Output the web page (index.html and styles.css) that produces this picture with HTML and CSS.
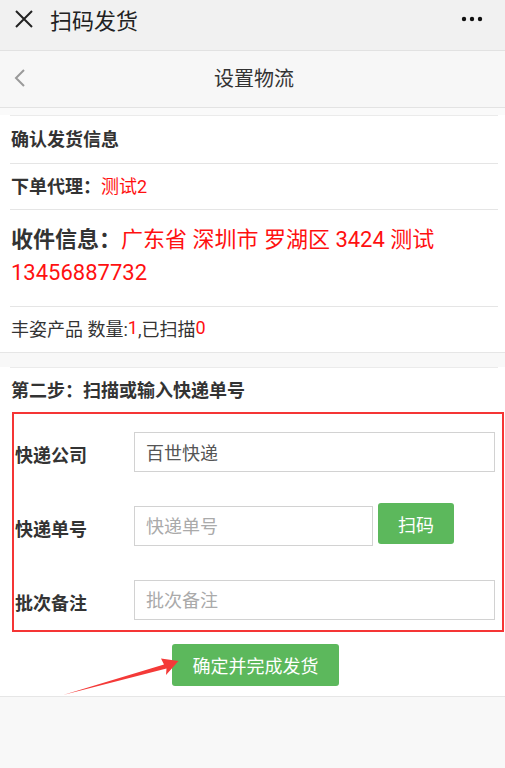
FILE: index.html
```html
<!DOCTYPE html>
<html lang="zh-CN">
<head>
<meta charset="utf-8">
<title>扫码发货</title>
<link rel="stylesheet" href="styles.css">
</head>
<body>
<div class="page">
  <header class="topbar">
    <svg class="close-icon" width="20" height="20" viewBox="0 0 20 20"><path d="M2 2 L18 18 M18 2 L2 18" stroke="#222" stroke-width="2" fill="none"/></svg>
    <span class="top-title">扫码发货</span>
    <svg class="more-icon" width="22" height="6" viewBox="0 0 22 6"><circle cx="3" cy="3" r="2.2" fill="#111"/><circle cx="11" cy="3" r="2.2" fill="#111"/><circle cx="19" cy="3" r="2.2" fill="#111"/></svg>
  </header>
  <nav class="navbar">
    <svg class="back-icon" width="14" height="20" viewBox="0 0 14 20"><polyline points="11,2 3,10 11,18" stroke="#9a9a9a" stroke-width="2" fill="none"/></svg>
    <span class="nav-title">设置物流</span>
  </nav>
  <div class="gap gap-top"></div>
  <section class="card">
    <div class="card-inner">
      <div class="row row-head bold">确认发货信息</div>
      <div class="row row-agent"><span class="bold">下单代理：</span><span class="red">测试2</span></div>
      <div class="row row-recv"><span class="bold">收件信息：</span><span class="red">广东省 深圳市 罗湖区 3424 测试</span> <span class="red">13456887732</span></div>
      <div class="row row-prod no-border">丰姿产品 数量:<span class="red">1</span>,已扫描<span class="red">0</span></div>
    </div>
  </section>
  <div class="gap gap-mid"></div>
  <section class="card">
    <div class="card-inner">
      <div class="row row-step bold no-border">第二步：扫描或输入快递单号</div>
      <div class="redbox">
        <div class="field">
          <label class="field-label">快递公司</label>
          <input class="field-input" type="text" value="百世快递">
        </div>
        <div class="field">
          <label class="field-label">快递单号</label>
          <input class="field-input short" type="text" placeholder="快递单号">
          <button class="btn btn-scan">扫码</button>
        </div>
        <div class="field">
          <label class="field-label">批次备注</label>
          <input class="field-input" type="text" placeholder="批次备注">
        </div>
      </div>
      <div class="submit-wrap">
        <button class="btn btn-submit">确定并完成发货</button>
      </div>
    </div>
  </section>
  <div class="bottom-fill"></div>
  <svg class="arrow" width="505" height="768" viewBox="0 0 505 768">
    <polygon points="63,695 164,664.5 161,658.5 178.5,661 166,675 166.5,668.5" fill="#f43a38"/>
  </svg>
</div>
</body>
</html>
```

FILE: styles.css
```css
* { box-sizing: border-box; }
html, body { margin: 0; padding: 0; }
body {
  width: 505px;
  height: 768px;
  overflow: hidden;
  background: #f8f8f8;
  font-family: Roboto, "Noto Sans CJK SC", sans-serif;
  color: #333;
  font-size: 18px;
}
.page { position: relative; height: 768px; }

.topbar {
  height: 51px;
  background: #f1f1f1;
  border-bottom: 1px solid #e2e2e2;
  display: flex;
  align-items: center;
  padding: 0 0 12px 14px;
}
.close-icon { flex: none; }
.top-title {
  margin-left: 16px;
  font-size: 22px;
  color: #222;
}
.more-icon { margin-left: auto; margin-right: 22px; }

.navbar {
  height: 57px;
  background: #f7f7f7;
  border-bottom: 1px solid #e3e3e3;
  display: flex;
  align-items: center;
  padding-left: 13px;
  padding-bottom: 3px;
}
.nav-title {
  flex: 1;
  text-align: center;
  font-size: 20px;
  color: #333;
  margin-right: 24px;
}

.gap { background: #f8f8f8; }
.gap-top { height: 7px; background: #fafafa; }
.gap-mid { height: 14px; }

.card {
  background: #fff;
  border-bottom: 1px solid #e6e6e6;
}
.card-inner {
  margin: 0 7px 0 10px;
  border-top: 1px solid #ebebeb;
}
.row {
  border-bottom: 1px solid #e5e5e5;
  display: flex;
  align-items: center;
  padding-left: 1px;
  padding-bottom: 4px;
}
.row.no-border { border-bottom: none; }
.bold { font-weight: 700; }
.red { color: #ff1010; }

.row-head { height: 48px; }
.row-agent { height: 46px; }
.row-recv {
  display: block;
  height: 97px;
  font-size: 22px;
  line-height: 33px;
  padding-top: 13px;
}
.row-prod { height: 45px; }
.row-step { height: 44px; padding-bottom: 2px; }

.redbox {
  margin-left: 2px;
  margin-right: -6px;
  border: 2px solid #f53535;
  padding: 18px 7px 10px 1px;
  display: flex;
  flex-direction: column;
  gap: 34px;
}
.field {
  display: flex;
  align-items: center;
  height: 40px;
}
.field-label {
  width: 119px;
  flex: none;
  font-weight: 700;
  padding-top: 4px;
}
.field-input {
  flex: 1;
  height: 40px;
  border: 1px solid #d2d2d2;
  border-radius: 0;
  padding: 0 11px;
  font-family: Roboto, "Noto Sans CJK SC", sans-serif;
  font-size: 18px;
  color: #555;
  background: #fff;
  outline: none;
  min-width: 0;
}
.field-input::placeholder { color: #aaa; }
.field-input.short { flex: none; width: 239px; }

.btn {
  border: none;
  background: #5cb85c;
  color: #fff;
  border-radius: 3px;
  font-family: Roboto, "Noto Sans CJK SC", sans-serif;
  font-size: 18px;
  padding: 0;
}
.btn-scan {
  width: 76px;
  height: 41px;
  margin-left: 5px;
  margin-top: -5px;
}
.submit-wrap {
  display: flex;
  justify-content: center;
  padding: 12px 0 10px;
}
.btn-submit {
  width: 167px;
  height: 42px;
  margin-left: 3px;
}

.arrow {
  position: absolute;
  left: 0;
  top: 0;
  pointer-events: none;
}
```
